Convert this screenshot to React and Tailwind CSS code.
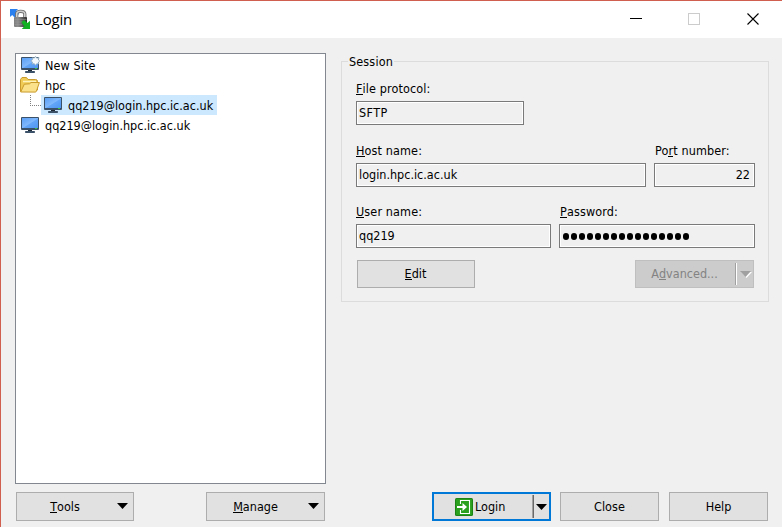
import React from "react";

function Monitor({ star }) {
  return (
    <svg width="20" height="18" viewBox="0 0 20 18" className="shrink-0">
      <defs>
        <linearGradient id="screen" x1="0" y1="0" x2="1" y2="1">
          <stop offset="0" stopColor="#5a9ff6" />
          <stop offset="0.5" stopColor="#80b8fc" />
          <stop offset="0.55" stopColor="#62a5f8" />
          <stop offset="1" stopColor="#4f96f2" />
        </linearGradient>
      </defs>
      <rect x="1" y="1" width="18" height="13" rx="1" fill="#3b5168" />
      <rect x="2" y="2" width="16" height="10" fill="url(#screen)" />
      <rect x="15" y="12" width="2" height="1" fill="#3fc43f" />
      <rect x="8" y="14" width="4" height="2" fill="#1c2935" />
      <rect x="5" y="15" width="10" height="2" rx="0.8" fill="#3b5168" />
      {star && (
        <path
          d="M15.5 0.3 L16.8 2.2 L19 1.6 L18.4 3.8 L19.8 5 L18.4 6.2 L18.7 8 L16.7 7.7 L15.4 9.4 L14.2 7.6 L12 8.2 L12.5 6 L10.8 4.9 L12.6 3.6 L12.2 1.7 L14.3 2.1 Z"
          fill="#f2f8fc"
          stroke="#86a3b8"
          strokeWidth="0.7"
        />
      )}
    </svg>
  );
}

function Folder() {
  return (
    <svg width="20" height="18" viewBox="0 0 20 18" className="shrink-0">
      <path d="M0.5 15.5 V3.5 L2 1.5 H6.5 L8 3.5 H15.5 Q17.5 3.5 17.5 5.5 V14 Z" fill="#f0cb55" stroke="#c99a2c" />
      <path d="M3 5.5 H16" stroke="#fff3bd" strokeWidth="1.5" />
      <path d="M0.7 16 L4.3 8.2 L9.5 7.8 L11 6.5 H19.4 L16.4 15.2 Q16.1 16.1 15.2 16.1 Z" fill="#fbe28a" stroke="#c99a2c" />
    </svg>
  );
}

function AppIcon() {
  return (
    <svg width="21" height="20" viewBox="0 0 21 20" className="mt-[8px] shrink-0 self-start">
      <defs>
        <linearGradient id="lock" x1="0" y1="0" x2="1" y2="0">
          <stop offset="0" stopColor="#7d7d7d" />
          <stop offset="0.3" stopColor="#8e8e8e" />
          <stop offset="0.7" stopColor="#555" />
          <stop offset="1" stopColor="#2c2c2c" />
        </linearGradient>
      </defs>
      <path d="M0 0 H8 L6.2 2 L9 5 L5 9 L2.2 6 L0 8 Z" fill="#2a80ee" />
      <path d="M6.7 9 V5 Q6.7 2.3 10.5 2.3 Q14.8 2.3 14.8 5 V9" fill="none" stroke="#6a6a6a" strokeWidth="3.2" />
      <path d="M6.7 9 V5 Q6.7 2.3 10.5 2.3 Q14.8 2.3 14.8 5 V9" fill="none" stroke="#cfcfcf" strokeWidth="1.6" />
      <rect x="4" y="8" width="13" height="10" rx="1" fill="url(#lock)" />
      <path d="M4.5 10.5 H16.5 M4.5 13 H14 M4.5 15.5 H12" stroke="#9a9a9a" strokeWidth="0.5" />
      <path d="M11.5 13.2 L14 11 L17.5 14 L20 11.7 V20 H11.8 L14.3 17.2 Z" fill="#12b022" />
    </svg>
  );
}

function LoginIcon() {
  return (
    <svg width="18" height="18" viewBox="0 0 18 18" className="shrink-0">
      <rect width="18" height="18" rx="1.5" fill="#1c8416" />
      <rect x="1" y="1" width="16" height="16" rx="1" fill="#2ba01f" />
      <path d="M5.5 6 V2.5 H14.5 V15.5 H5.5 V12" fill="none" stroke="#fff" strokeWidth="1.1" />
      <path d="M2 8 H7.5 V5 L12 9 L7.5 13 V10 H2 Z" fill="#fff" />
    </svg>
  );
}

function Arrow({ className = "" }) {
  return (
    <svg width="11" height="6" viewBox="0 0 11 6" className={"shrink-0 " + className}>
      <path d="M0 0 H11 L5.5 6 Z" fill="currentColor" />
    </svg>
  );
}

// Single character drawn with its accelerator underline.
function Key({ children }) {
  return <span className="inline-block h-[14px] border-b border-current leading-[15px]">{children}</span>;
}

function Label({ children, className = "" }) {
  return <div className={"h-4 leading-4 tracking-[0.12px] " + className}>{children}</div>;
}

function Field({ children, className = "" }) {
  return (
    <div className={"h-6 border border-[#7a7a7a] bg-[#f0f0f0] px-0.5 leading-[22px] shadow-[inset_0_0_0_1px_#fff] " + className}>
      {children}
    </div>
  );
}

function Button({ children, className = "" }) {
  return (
    <button className={"flex shrink-0 items-center justify-center border border-[#adadad] bg-[#e1e1e1] " + className}>
      {children}
    </button>
  );
}

export default function App() {
  return (
    <div className="flex h-[527px] w-[782px] flex-col overflow-hidden border-t border-l border-[#d15f4f] bg-[#f0f0f0] font-['DejaVu_Sans_Condensed','DejaVu_Sans',sans-serif] text-[12.5px] [font-stretch:condensed] whitespace-nowrap text-black">
      <header className="flex h-[37px] shrink-0 items-center bg-white pl-[9px]">
        <AppIcon />
        <span className="mb-[2px] ml-1 w-[60px] font-['Open_Sans',sans-serif] text-[15px] leading-5 tracking-[-0.2px] [font-stretch:normal]">Login</span>
        <svg width="132" height="14" viewBox="0 0 132 14" className="mt-[11px] mr-[20px] ml-auto self-start">
          <path d="M0 6.5 H12" stroke="#000" />
          <rect x="58.5" y="1.5" width="11" height="11" fill="none" stroke="#ccc" />
          <path d="M117.5 1.5 L128.5 12.5 M128.5 1.5 L117.5 12.5" stroke="#000" strokeWidth="1.1" />
        </svg>
      </header>

      <main className="flex h-[446px] shrink-0 pt-[15px] pl-[14px]">
        <div className="h-[431px] w-[311px] shrink-0 border border-[#828790] bg-white pt-px pl-1">
          <div className="flex h-5 items-center">
            <Monitor star />
            <span className="mt-[2px] ml-[5px] leading-[18px] tracking-[0.12px]">New Site</span>
          </div>
          <div className="flex h-5 items-center">
            <Folder />
            <span className="mt-[2px] ml-[5px] leading-[18px]">hpc</span>
          </div>
          <div className="flex h-5 pl-[10px]">
            <div className="h-[11px] w-[11px] shrink-0 border-b border-l border-dotted border-[#808080]" />
            <div className="flex w-[176px] items-center bg-[#cce8ff] pl-[2px]">
              <Monitor />
              <span className="mt-[2px] ml-[5px] leading-[18px]">qq219@login.hpc.ic.ac.uk</span>
            </div>
          </div>
          <div className="flex h-5 items-center">
            <Monitor />
            <span className="mt-[2px] ml-[5px] leading-[18px]">qq219@login.hpc.ic.ac.uk</span>
          </div>
        </div>

        <fieldset className="ml-[15px] h-[249px] w-[428px] shrink-0 border border-[#dcdcdc] pl-[14px]">
          <legend className="-ml-2 h-4 px-px leading-[18px] tracking-[0.15px]">Session</legend>
          <div className="-mt-px flex flex-col pt-[13px]">
            <Label><Key>F</Key>ile protocol:</Label>
            <Field className="mt-1 w-[168px]"><span className="tracking-[0.4px]">SFTP</span></Field>
            <div className="mt-[18px] flex gap-2">
              <div className="w-[290px]">
                <Label><Key>H</Key>ost name:</Label>
                <Field className="mt-1">login.hpc.ic.ac.uk</Field>
              </div>
              <div className="w-[101px]">
                <Label className="pl-px">Po<Key>r</Key>t number:</Label>
                <Field className="mt-1 pr-1 text-right">22</Field>
              </div>
            </div>
            <div className="mt-[17px] flex gap-2">
              <div className="w-[195px]">
                <Label><Key>U</Key>ser name:</Label>
                <Field className="mt-1">qq219</Field>
              </div>
              <div className="w-[196px]">
                <Label className="pl-px"><Key>P</Key>assword:</Label>
                <Field className="mt-1 flex items-center gap-[2px] pl-[3px]">
                  {Array.from({ length: 16 }, (_, i) => (
                    <span key={i} className="h-[7px] w-[6px] rounded-full bg-black" />
                  ))}
                </Field>
              </div>
            </div>
            <div className="mt-3 flex w-[398px] justify-between pl-px">
              <Button className="h-7 w-[118px]"><span className="pt-px pr-px"><Key>E</Key>dit</span></Button>
              <div className="flex h-7 w-[119px] items-center border border-[#bfbfbf] bg-[#ccc] text-[#838383]">
                <span className="flex-1 pt-px pr-[2px] text-center">A<Key>d</Key>vanced...</span>
                <span className="h-[22px] w-[2px] border-r border-l border-r-white border-l-[#a0a0a0]" />
                <Arrow className="mr-[2px] ml-[3px] text-[#a0a0a0] drop-shadow-[1px_1px_0_#fff]" />
              </div>
            </div>
          </div>
        </fieldset>
      </main>

      <footer className="flex shrink-0 pt-2 pl-[15px]">
        <Button className="h-[29px] w-[118px]">
          <span className="w-[100px] pt-px pr-[4px] text-center"><Key>T</Key>ools</span>
          <Arrow className="mr-[5px] mb-px" />
        </Button>
        <Button className="ml-[72px] h-[29px] w-[119px]">
          <span className="w-[101px] pt-px pr-[4px] text-center"><Key>M</Key>anage</span>
          <Arrow className="mr-[5px] mb-px" />
        </Button>
        <button className="ml-[107px] flex h-[29px] w-[119px] shrink-0 items-center border-2 border-[#0078d7] bg-[#e1e1e1]">
          <span className="flex flex-1 items-center gap-[2px] pl-[21px]">
            <LoginIcon />
            <span className="pt-px">Login</span>
          </span>
          <span className="h-[23px] w-[2px] border-r border-l border-r-[#696969] border-l-[#a0a0a0]" />
          <Arrow className="mx-[2px]" />
        </button>
        <Button className="ml-[9px] h-[29px] w-[99px]"><span className="pt-px tracking-[0.1px]">Close</span></Button>
        <Button className="ml-[10px] h-[29px] w-[99px]"><span className="pt-px">Help</span></Button>
      </footer>
    </div>
  );
}
